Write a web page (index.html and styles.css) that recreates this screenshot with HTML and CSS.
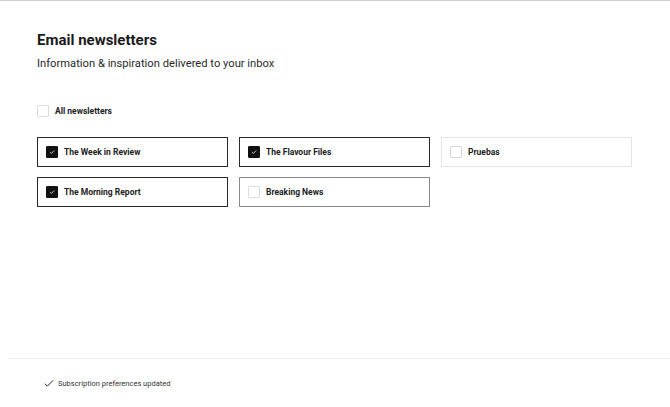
FILE: index.html
```html
<!DOCTYPE html>
<html lang="en">
<head>
    <meta charset="UTF-8">
    <meta name="viewport" content="width=device-width, initial-scale=1.0">
    <link rel="stylesheet" href="styles.css">
    <title>Email newsletters</title>
</head>
<body>
    <div class="page">
        <main class="prefs">
            <h1>Email newsletters</h1>
            <p class="lead">Information &amp; inspiration delivered to your inbox</p>

            <label class="all">
                <span class="box"></span>
                <span>All newsletters</span>
            </label>

            <div class="grid">
                <label class="card checked">
                    <span class="box"><svg viewBox="0 0 12 12"><path d="M3.5 6.2l1.7 1.6 3.4-3.6"/></svg></span>
                    <span>The Week in Review</span>
                </label>
                <label class="card checked">
                    <span class="box"><svg viewBox="0 0 12 12"><path d="M3.5 6.2l1.7 1.6 3.4-3.6"/></svg></span>
                    <span>The Flavour Files</span>
                </label>
                <label class="card">
                    <span class="box"></span>
                    <span>Pruebas</span>
                </label>
                <label class="card checked">
                    <span class="box"><svg viewBox="0 0 12 12"><path d="M3.5 6.2l1.7 1.6 3.4-3.6"/></svg></span>
                    <span>The Morning Report</span>
                </label>
                <label class="card hover">
                    <span class="box"></span>
                    <span>Breaking News</span>
                </label>
            </div>
        </main>

        <footer class="status">
            <svg class="tick" viewBox="0 0 12 10"><path d="M1 5.2l3 3L11 1.2"/></svg>
            <span>Subscription preferences updated</span>
        </footer>
    </div>
</body>
</html>
```

FILE: styles.css
```css
*{
    margin: 0;
    padding: 0;
    box-sizing: border-box;
}
body{
    font-family: Roboto, "Liberation Sans", Arial, sans-serif;
    color: #1f1f1f;
    background: #fff;
}
.page{
    display: flex;
    flex-direction: column;
    min-height: 100vh;
    border-top: 1px solid #cfcfcf;
}
.prefs{
    flex: 1;
    padding: 30px 37px 0 37px;
}
.prefs h1{
    font-size: 15px;
    font-weight: 700;
    line-height: 18px;
    color: #1a1a1a;
}
.prefs .lead{
    margin-top: 8px;
    font-size: 11.2px;
    line-height: 14px;
    color: #2a2a2a;
}
.box{
    display: inline-flex;
    align-items: center;
    justify-content: center;
    width: 12px;
    height: 12px;
    border: 1px solid #dcdcdc;
    border-radius: 1px;
    background: #fff;
    flex-shrink: 0;
}
.box svg{
    width: 12px;
    height: 12px;
    fill: none;
    stroke: #fff;
    stroke-width: 0.9;
}
.all{
    display: flex;
    align-items: center;
    gap: 6px;
    margin-top: 34px;
    font-size: 8.5px;
    font-weight: 700;
    color: #222;
}
.grid{
    display: grid;
    grid-template-columns: repeat(3, 191px);
    grid-auto-rows: 30px;
    column-gap: 11px;
    row-gap: 10px;
    margin-top: 20px;
}
.card{
    display: flex;
    align-items: center;
    gap: 6px;
    padding: 0 8px;
    border: 1px solid #e3e3e3;
    font-size: 8.5px;
    font-weight: 700;
    color: #222;
}
.card.checked{
    border: 1.5px solid #2a2a2a;
}
.card.checked .box{
    background: #111;
    border-color: #111;
}
.card.hover{
    border-color: #8c8c8c;
}
.status{
    display: flex;
    align-items: center;
    gap: 4px;
    height: 49px;
    margin-left: 8px;
    padding-left: 36px;
    border-top: 1px solid #ececec;
    font-size: 7.5px;
    color: #333;
}
.tick{
    width: 10px;
    height: 9px;
    fill: none;
    stroke: #222;
    stroke-width: 1.2;
}
```
